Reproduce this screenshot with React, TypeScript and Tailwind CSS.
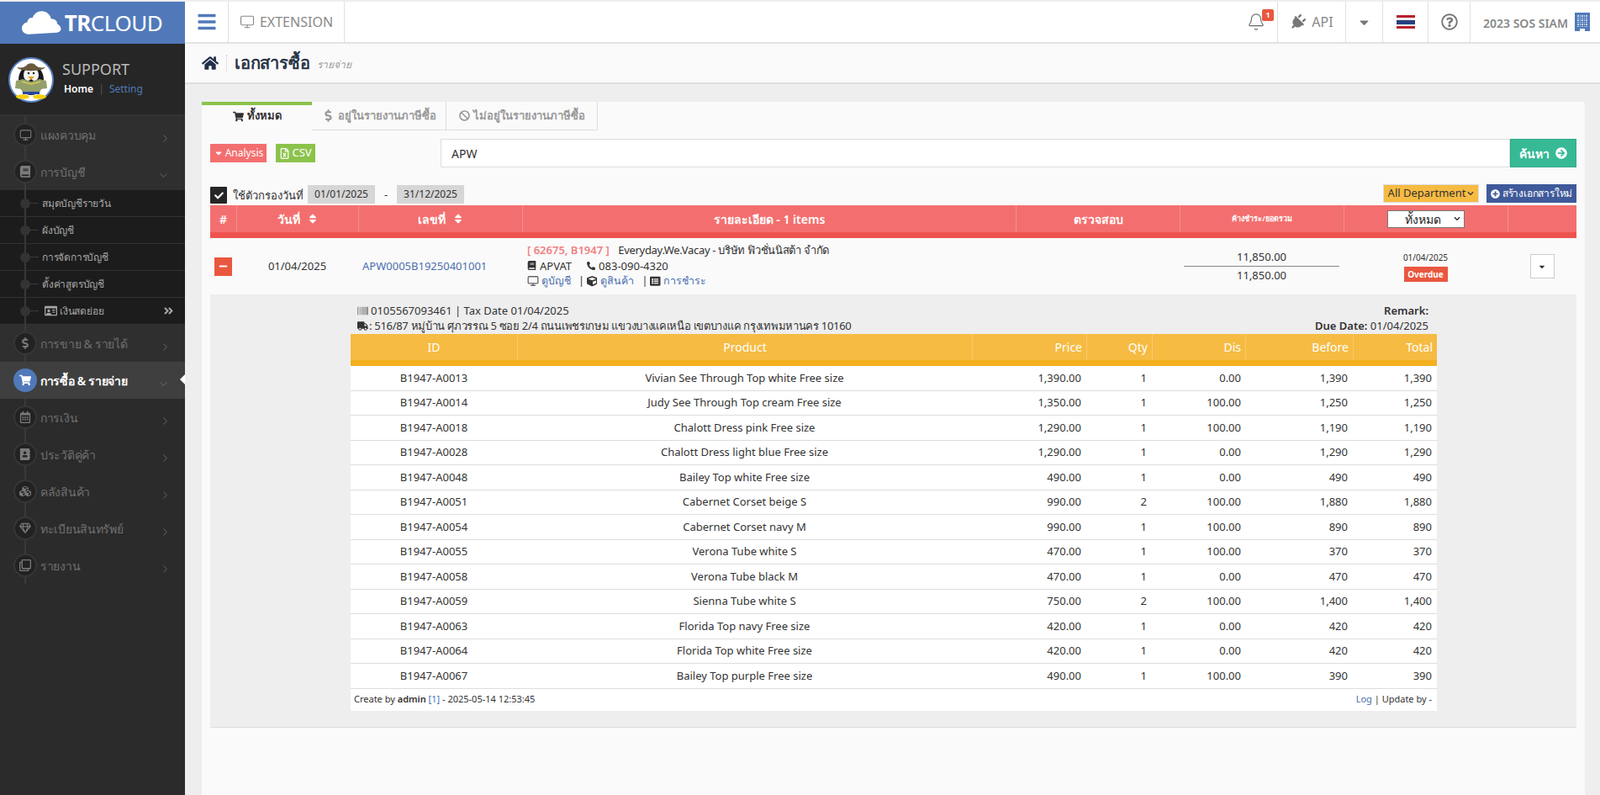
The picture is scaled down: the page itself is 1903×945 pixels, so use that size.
import {
  FaAddressBook, FaAngleDoubleRight, FaArrowCircleRight, FaBan, FaBars, FaBarcode, FaBook, FaCaretDown, FaCheck,
  FaChevronDown, FaCube, FaCubes, FaDollarSign, FaHome, FaListAlt, FaMinus, FaPhoneAlt, FaPlug, FaPlusCircle,
  FaRegCalendarAlt, FaRegClone, FaRegFileExcel, FaRegGem, FaRegIdCard, FaRegQuestionCircle, FaShoppingCart,
  FaSort, FaTruck,
} from "react-icons/fa"
import { Bell, ChevronDown, ChevronRight, Monitor } from "lucide-react"
import type { ReactNode } from "react"

const rows = [
  ["B1947-A0013", "Vivian See Through Top white Free size", "1,390.00", "1", "0.00", "1,390", "1,390"],
  ["B1947-A0014", "Judy See Through Top cream Free size", "1,350.00", "1", "100.00", "1,250", "1,250"],
  ["B1947-A0018", "Chalott Dress pink Free size", "1,290.00", "1", "100.00", "1,190", "1,190"],
  ["B1947-A0028", "Chalott Dress light blue Free size", "1,290.00", "1", "0.00", "1,290", "1,290"],
  ["B1947-A0048", "Bailey Top white Free size", "490.00", "1", "0.00", "490", "490"],
  ["B1947-A0051", "Cabernet Corset beige S", "990.00", "2", "100.00", "1,880", "1,880"],
  ["B1947-A0054", "Cabernet Corset navy M", "990.00", "1", "100.00", "890", "890"],
  ["B1947-A0055", "Verona Tube white S", "470.00", "1", "100.00", "370", "370"],
  ["B1947-A0058", "Verona Tube black M", "470.00", "1", "0.00", "470", "470"],
  ["B1947-A0059", "Sienna Tube white S", "750.00", "2", "100.00", "1,400", "1,400"],
  ["B1947-A0063", "Florida Top navy Free size", "420.00", "1", "0.00", "420", "420"],
  ["B1947-A0064", "Florida Top white Free size", "420.00", "1", "0.00", "420", "420"],
  ["B1947-A0067", "Bailey Top purple Free size", "490.00", "1", "100.00", "390", "390"],
]

const itemCols = "grid grid-cols-[198px_541px_136px_78px_111px_128px_100px]"
const mainCols = "grid grid-cols-[31px_145px_195px_587px_195px_195px_195px_82px]"

function Avatar() {
  return (
    <svg viewBox="0 0 54 54" className="h-[54px] w-[54px] shrink-0">
      <circle cx="27" cy="27" r="26" fill="#fff" stroke="#5a7fc0" strokeWidth="2" />
      <ellipse cx="27" cy="27" rx="15" ry="18" fill="#17181c" />
      <ellipse cx="23" cy="21" rx="5" ry="7" fill="#f2f2f2" />
      <ellipse cx="31" cy="21" rx="5" ry="7" fill="#f2f2f2" />
      <circle cx="24" cy="19" r="1.2" fill="#111" />
      <circle cx="30" cy="19" r="1.2" fill="#111" />
      <path d="M23 23h8l-4 4z" fill="#e8a317" />
      <path d="M10 12c5 1 8 0 11-1 1-5 11-5 12 0 3 1 6 2 11 1-3 3-8 4-17 4s-14-1-17-4z" fill="#6b5a3c" />
      <path d="M9 28l8-2 10 3 10-3 8 2 1 9-8 1v3H16v-3l-8-1z" fill="#93a06a" />
      <path d="M16 29l11 3 11-3" fill="none" stroke="#d8c95a" strokeWidth="1.4" />
      <path d="M17 41h20v3H17z" fill="#2346a8" />
      <ellipse cx="17" cy="47" rx="8" ry="2.8" fill="#f4cf0c" />
      <ellipse cx="37" cy="47" rx="8" ry="2.8" fill="#f4cf0c" />
    </svg>
  )
}

function Cloud() {
  return (
    <svg viewBox="0 0 48 28" className="h-[28px] w-[47px] shrink-0" fill="#fff">
      <path d="M8 28C3 28 0 24.500 0 21c0-4 3-7 6.500-7.500C7 9.500 10 7.500 13 8c2-5 6-8 11-8 6 0 10.500 4 11.500 9.500 2-.5 4 0 5.500 1.500 1.500 1.500 2 3 2 4.500 2.500 1 4.500 3.500 4.500 6 0 2.500-2 4.500-5 4.500z" />
    </svg>
  )
}

function Building() {
  const dots = Array.from({ length: 30 })
  return (
    <div className="relative flex h-[22px] w-[18px] shrink-0 flex-col bg-[#5179b9] px-[3px] pt-[3px]">
      <div className="grid grid-cols-5 gap-[1px]">
        {dots.map((_, i) => (
          <div key={i} className="h-[1.500px] bg-[#c5d3ea]" />
        ))}
      </div>
      <div className="absolute bottom-0 left-[6px] h-[3px] w-[6px] bg-white" />
    </div>
  )
}

function SideItem({ icon, label, open, active, light }: { icon: ReactNode; label: string; open?: boolean; active?: boolean; light?: boolean }) {
  return (
    <div className={`relative flex h-11 items-center pl-[16px] pr-[16px] ${active ? "bg-[#3f3f3f]" : light ? "bg-[#2f2f2f]" : ""}`}>
      {!active && <div className="absolute bottom-0 left-[29px] top-0 w-[2px] bg-[#3a3a3a]" />}
      <div className={`relative flex h-[28px] w-[28px] items-center justify-center rounded-full text-[14px] ${active ? "bg-[#5179b9] text-white" : "border-2 border-[#363636] bg-[#222222] text-[#7a7a7a]"}`}>
        {icon}
      </div>
      <span className={`ml-[4px] flex-1 text-[14px] tracking-[-0.3px] ${active ? "font-semibold text-white" : "text-[#707070]"}`}>{label}</span>
      {open ? <ChevronDown size={15} strokeWidth={1.25} className="mr-[2px] mt-[8px] text-[#777777]" /> : <ChevronRight size={15} strokeWidth={1.25} className="mt-[8px] text-[#777777]" />}
      {active && <div className="absolute right-0 top-[15px] h-0 w-0 border-y-[6px] border-r-[6px] border-y-transparent border-r-white" />}
    </div>
  )
}

function SubItem({ label, icon, end }: { label: string; icon?: ReactNode; end?: boolean }) {
  return (
    <div className="relative flex h-8 items-center border-b border-[#333333] pl-[50px] pr-[13px] text-[12px] tracking-[-0.2px] text-[#a6a6a6]">
      <div className="absolute bottom-0 left-[29px] top-0 w-[2px] bg-[#383838]" />
      <div className="absolute left-[24px] top-[10px] h-[12px] w-[12px] rounded-full bg-[#333333]" />
      <div className="absolute left-[36px] top-[15px] h-px w-[10px] bg-[#3a3a3a]" />
      {icon && <span className="ml-[3px] mr-[3px] text-[15px]">{icon}</span>}
      <span className="flex-1">{label}</span>
      {end && <FaAngleDoubleRight className="text-[13px]" />}
    </div>
  )
}

function Tab({ children, active, width }: { children: ReactNode; active?: boolean; width: string }) {
  return (
    <div className={`flex h-[34px] items-center justify-center gap-1 text-[13px] font-semibold ${width} ${active ? "border-t-4 border-[#8bc34a] pb-[4px] text-[#333333]" : "border-b border-r border-[#dddddd] text-[#999999]"}`}>
      {children}
    </div>
  )
}

export default function App() {
  return (
    <div className="flex h-screen w-full flex-col overflow-hidden bg-[#eeeeee] font-['Open_Sans','Noto_Sans',sans-serif] text-[13px] text-[#333333]">
      <header className="mt-[2px] flex h-[50px] shrink-0 bg-white">
        <div className="flex w-[220px] shrink-0 items-center justify-center gap-[4px] bg-[#5179b9] pr-[1px] text-white">
          <Cloud />
          <div className="text-[26px] leading-none tracking-[-0.5px]"><b>TR</b>CLOUD</div>
        </div>
        <div className="flex flex-1 border-b-2 border-[#e2e2e2]">
          <div className="flex w-[51px] items-center justify-center text-[24px] text-[#5179b9]"><FaBars /></div>
          <div className="flex w-[139px] items-center justify-center gap-[6px] border-x border-[#e0e0e0] text-[16px] text-[#888888]">
            <Monitor size={18} strokeWidth={1.5} /> EXTENSION
          </div>
          <div className="ml-auto flex">
            <div className="relative flex w-[50px] items-center justify-center text-[#666666]">
              <Bell size={22} strokeWidth={1.25} />
              <span className="absolute right-[4px] top-[9px] flex h-[14px] w-[14px] items-center justify-center rounded-[2px] bg-[#e9573f] text-[9px] font-bold text-white">1</span>
            </div>
            <div className="flex w-[81px] items-center justify-center gap-[7px] border-l border-[#e0e0e0] text-[16px] text-[#888888]"><FaPlug className="rotate-45 text-[19px] text-[#777777]" /> API</div>
            <div className="flex w-[44px] items-center justify-center border-l border-[#e0e0e0] text-[17px] text-[#777777]"><FaCaretDown /></div>
            <div className="flex w-[54px] items-center justify-center border-l border-[#e0e0e0]">
              <div className="flex h-[16px] w-[22px] flex-col">
                <div className="h-[3px] bg-[#b8202f]" />
                <div className="h-[3px] bg-[#eeeeee]" />
                <div className="h-[5px] bg-[#27417f]" />
                <div className="h-[2px] bg-[#eeeeee]" />
                <div className="h-[3px] bg-[#b8202f]" />
              </div>
            </div>
            <div className="flex w-[50px] items-center justify-center border-l border-[#e0e0e0] text-[20px] text-[#777777]"><FaRegQuestionCircle /></div>
            <div className="flex w-[155px] items-center gap-[8px] border-l border-[#e0e0e0] pl-[15px] text-[14px] font-semibold text-[#888888]">
              <span className="mt-[3px]">2023 SOS SIAM</span>
              <Building />
            </div>
          </div>
        </div>
      </header>
      <div className="flex min-h-0 flex-1">
        <aside className="w-[220px] shrink-0 overflow-hidden bg-[#2b2b2b]">
          <div className="flex h-[86px] gap-[10px] border-b-2 border-[#333333] bg-[#262626] pl-[10px] pt-[16px]">
            <Avatar />
            <div>
              <div className="mt-[2px] text-[18px] leading-[24px] text-[#bbbbbb]">SUPPORT</div>
              <div className="ml-[2px] mt-[3px] text-[12px] font-semibold text-white">Home <span className="mx-[3px] font-normal text-[#555555]">|</span> <span className="font-normal text-[#5179b9]">Setting</span></div>
            </div>
          </div>
          <SideItem light icon={<Monitor size={15} strokeWidth={1.75} />} label="แผงควบคุม" />
          <SideItem light open icon={<FaBook />} label="การบัญชี" />
          <div className="bg-[#1c1c1c]">
            <SubItem label="สมุดบัญชีรายวัน" />
            <SubItem label="ผังบัญชี" />
            <SubItem label="การจัดการบัญชี" />
            <SubItem label="ตั้งค่าสูตรบัญชี" />
            <SubItem icon={<FaRegIdCard />} label="เงินสดย่อย" end />
          </div>
          <SideItem light icon={<FaDollarSign />} label="การขาย & รายได้" />
          <SideItem active open icon={<FaShoppingCart />} label="การซื้อ & รายจ่าย" />
          <SideItem icon={<FaRegCalendarAlt />} label="การเงิน" />
          <SideItem icon={<FaAddressBook />} label="ประวัติคู่ค้า" />
          <SideItem icon={<FaCubes />} label="คลังสินค้า" />
          <SideItem icon={<FaRegGem />} label="ทะเบียนสินทรัพย์" />
          <SideItem icon={<FaRegClone />} label="รายงาน" />
        </aside>
        <main className="flex min-w-0 flex-1 flex-col">
          <div className="flex h-[48px] shrink-0 items-center border-b-2 border-[#dddddd] bg-[#fafafa] pl-[20px]">
            <FaHome className="text-[20px] text-[#22304a]" />
            <div className="mx-[9px] h-[20px] border-l border-dotted border-[#cccccc]" />
            <h1 className="text-[20px] font-semibold tracking-[-0.2px] text-[#2a3547]">เอกสารซื้อ</h1>
            <span className="ml-[9px] mt-[3px] text-[12px] italic text-[#999999]">รายจ่าย</span>
          </div>
          <div className="min-h-0 flex-1 pl-[20px] pr-[18px] pt-[21px]">
            <div className="h-full rounded-t-[2px] bg-[#fafafa]">
              <div className="flex">
                <Tab active width="w-[131px]"><FaShoppingCart /> ทั้งหมด</Tab>
                <Tab width="w-[160px]"><FaDollarSign className="text-[15px]" /> อยู่ในรายงานภาษีซื้อ</Tab>
                <Tab width="w-[180px]"><FaBan /> ไม่อยู่ในรายงานภาษีซื้อ</Tab>
              </div>
              <div className="px-[10px]">
                <div className="mt-[10px] flex h-[34px] items-center">
                  <div className="flex h-[22px] w-[67px] items-center justify-center gap-[2px] bg-[#f36f6f] text-[12px] text-white"><FaCaretDown className="text-[12px]" /> Analysis</div>
                  <div className="ml-[11px] flex h-[22px] w-[47px] items-center justify-center gap-[2px] bg-[#8bc34a] text-[13px] text-white"><FaRegFileExcel /> CSV</div>
                  <div className="ml-[149px] flex h-[34px] flex-1 items-center border border-[#dddddd] bg-white pl-[12px] text-[14px] text-[#333333]">APW</div>
                  <div className="flex h-[34px] w-[79px] items-center justify-center gap-[7px] border border-[#32a98a] bg-[#37b996] text-[14px] font-semibold text-white">ค้นหา <FaArrowCircleRight /></div>
                </div>
                <div className="mt-[21px] flex h-[24px] items-start">
                  <div className="mt-[2px] flex h-[20px] w-[20px] items-center justify-center rounded-[1px] bg-[#262626] text-[11px] text-white"><FaCheck /></div>
                  <span className="ml-[7px] mt-[3px] w-[89px] whitespace-nowrap text-[13px] font-medium">ใช้ตัวกรองวันที่</span>
                  <div className="flex h-[22px] w-[80px] items-center justify-center bg-[#d6d6d6] text-[12px]">01/01/2025</div>
                  <span className="mt-[2px] w-[26px] text-center">-</span>
                  <div className="flex h-[22px] w-[80px] items-center justify-center bg-[#d6d6d6] text-[12px]">31/12/2025</div>
                  <div className="ml-auto mt-[-1px] flex h-[22px] w-[114px] items-center justify-center gap-[2px] border border-[#dddddd] bg-[#f6bb42] text-[13px]">All Department <FaChevronDown className="text-[8px]" /></div>
                  <div className="ml-[9px] mt-[-1px] flex h-[22px] w-[107px] items-center justify-center gap-[3px] bg-[#3f5a9a] text-[12px] tracking-[-0.2px] text-white"><FaPlusCircle className="text-[11px]" /> สร้างเอกสารใหม่</div>
                </div>
                <div className={`${mainCols} h-[39px] border-b-[7px] border-[#ef5350] bg-[#f36f6f] text-[14px] font-semibold text-white`}>
                  <div className="flex items-center justify-center">#</div>
                  <div className="flex items-center justify-center gap-2 border-l border-[#f58c8c]">วันที่ <FaSort /></div>
                  <div className="flex items-center justify-center gap-2 border-l border-[#f58c8c]">เลขที่ <FaSort /></div>
                  <div className="flex items-center justify-center border-l border-[#f58c8c]">รายละเอียด - 1 items</div>
                  <div className="flex items-center justify-center border-l border-[#f58c8c]">ตรวจสอบ</div>
                  <div className="flex items-center justify-center border-l border-[#f58c8c] text-[9px]">ค้างชำระ/ยอดรวม</div>
                  <div className="flex items-center justify-center border-l border-[#f58c8c]">
                    <div className="flex h-[21px] w-[92px] items-center justify-between border border-[#777777] bg-white pl-[20px] pr-[4px] text-[14px] font-normal text-[#222222]">ทั้งหมด <FaChevronDown className="text-[8px]" /></div>
                  </div>
                  <div className="border-l border-[#f58c8c]" />
                </div>
                <div className={`${mainCols} h-[67px] bg-[#fafafa]`}>
                  <div className="flex items-center justify-center">
                    <div className="flex h-[22px] w-[21px] items-center justify-center bg-[#e9573f] text-[11px] text-white"><FaMinus /></div>
                  </div>
                  <div className="flex items-center justify-center">01/04/2025</div>
                  <div className="flex items-center pl-[5px] text-[#4a6fb0]">APW0005B19250401001</div>
                  <div className="pl-[6px] pt-[5px] text-[13px] leading-[18.500px]">
                    <div><span className="mr-[7px] font-semibold text-[#f08080]">[ 62675, B1947 ]</span> <span className="tracking-[-0.3px]">Everyday.We.Vacay - บริษัท ฟิวชั่นนิสต้า จำกัด</span></div>
                    <div className="flex items-center gap-[4px]"><FaBook className="text-[11px]" /> APVAT <FaPhoneAlt className="ml-[14px] text-[10px]" /> 083-090-4320</div>
                    <div className="flex items-center text-[12.500px] text-[#4a6fb0]">
                      <Monitor size={14} strokeWidth={2.25} className="text-[#666666]" /><span className="ml-[3px]">ดูบัญชี</span>
                      <span className="ml-[9px] text-[#333333]">|</span><FaCube className="ml-[3px] text-[#333333]" /><span className="ml-[4px]">ดูสินค้า</span>
                      <span className="ml-[9px] text-[#333333]">|</span><FaListAlt className="ml-[3px] text-[#333333]" /><span className="ml-[3px]">การชำระ</span>
                    </div>
                  </div>
                  <div />
                  <div className="flex flex-col items-center justify-center pb-[2px]">
                    <div className="w-[185px] border-b border-[#888888] pb-[1px] text-center leading-[20px]">11,850.00</div>
                    <div className="leading-[20px]">11,850.00</div>
                  </div>
                  <div className="flex flex-col items-center justify-center gap-[2px] pb-[1px]">
                    <div className="text-[10px] leading-[18px]">01/04/2025</div>
                    <div className="flex h-[18px] w-[52px] items-center justify-center bg-[#e9573f] text-[10px] font-bold text-white">Overdue</div>
                  </div>
                  <div className="flex items-center justify-center">
                    <div className="flex h-[29px] w-[29px] items-center justify-center border border-[#cccccc] bg-white text-[10px]"><FaCaretDown /></div>
                  </div>
                </div>
                <div className="h-[515px] border-b border-[#dddddd] bg-[#eeeeee] pl-[167px] pr-[166px]">
                  <div className="flex h-[47px] justify-between pl-[8px] pr-[10px] pt-[11px] text-[13px] leading-[17.500px]">
                    <div>
                      <div className="flex items-center gap-[3px]"><FaBarcode className="text-[#666666]" /> 0105567093461 | Tax Date 01/04/2025</div>
                      <div className="flex items-center tracking-[-0.3px]"><FaTruck className="mr-[1px] text-[13px]" />: 516/87 หมู่บ้าน ศุภวรรณ 5 ซอย 2/4 ถนนเพชรเกษม แขวงบางแคเหนือ เขตบางแค กรุงเทพมหานคร 10160</div>
                    </div>
                    <div className="text-right">
                      <div className="font-semibold">Remark:</div>
                      <div><span className="font-semibold">Due Date:</span> 01/04/2025</div>
                    </div>
                  </div>
                  <div className={`${itemCols} h-[38px] border-b-[7px] border-[#f4b020] bg-[#f6bb42] text-[14px] text-white`}>
                    <div className="flex items-center justify-center">ID</div>
                    <div className="flex items-center justify-center border-l border-[#f8ca6c]">Product</div>
                    <div className="flex items-center justify-end border-l border-[#f8ca6c] pr-[5px]">Price</div>
                    <div className="flex items-center justify-end border-l border-[#f8ca6c] pr-[5px]">Qty</div>
                    <div className="flex items-center justify-end border-l border-[#f8ca6c] pr-[5px]">Dis</div>
                    <div className="flex items-center justify-end border-l border-[#f8ca6c] pr-[5px]">Before</div>
                    <div className="flex items-center justify-end border-l border-[#f8ca6c] pr-[5px]">Total</div>
                  </div>
                  <div className="bg-white">
                    {rows.map((r) => (
                      <div key={r[0]} className={`${itemCols} h-[29.5px] items-center border-b border-[#dddddd] text-[13px]`}>
                        <div className="text-center">{r[0]}</div>
                        <div className="text-center">{r[1]}</div>
                        <div className="pr-[6px] text-right">{r[2]}</div>
                        <div className="pr-[6px] text-right">{r[3]}</div>
                        <div className="pr-[5px] text-right">{r[4]}</div>
                        <div className="pr-[6px] text-right">{r[5]}</div>
                        <div className="pr-[6px] text-right">{r[6]}</div>
                      </div>
                    ))}
                    <div className="flex h-[26px] items-center justify-between pl-[4px] pr-[6px] text-[11px]">
                      <div>Create by <b className="font-semibold">admin</b> <span className="text-[#4a6fb0]">[1]</span> - 2025-05-14 12:53:45</div>
                      <div><span className="text-[#4a6fb0]">Log</span> | Update by -</div>
                    </div>
                  </div>
                </div>
              </div>
            </div>
          </div>
        </main>
      </div>
    </div>
  )
}
